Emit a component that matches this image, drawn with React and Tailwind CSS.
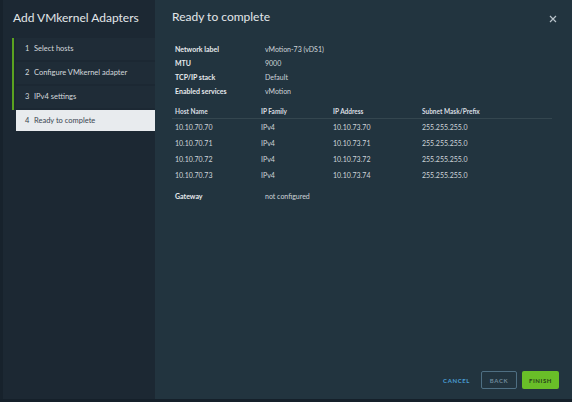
import React from 'react';

const steps = ['Select hosts', 'Configure VMkernel adapter', 'IPv4 settings', 'Ready to complete'];

const props = [
  ['Network label', 'vMotion-73 (vDS1)'],
  ['MTU', '9000'],
  ['TCP/IP stack', 'Default'],
  ['Enabled services', 'vMotion'],
];

const rows = [
  ['10.10.70.70', 'IPv4', '10.10.73.70', '255.255.255.0'],
  ['10.10.70.71', 'IPv4', '10.10.73.71', '255.255.255.0'],
  ['10.10.70.72', 'IPv4', '10.10.73.72', '255.255.255.0'],
  ['10.10.70.73', 'IPv4', '10.10.73.74', '255.255.255.0'],
];

export default function App() {
  return (
    <div
      className="w-[572px] h-[402px] flex bg-[#22343f] border-b-[3px] border-[#15202a] overflow-hidden"
      style={{ fontFamily: 'Lato, "Noto Sans", sans-serif' }}
    >
      {/* ── Sidebar ── */}
      <div className="w-[155px] shrink-0 bg-[#1c2833] border-l-[3px] border-[#17222c] flex flex-col">
        <h1 className="whitespace-nowrap text-[12px] text-[#e3e7ea] pl-[10px] pt-[9px] leading-[18px]">
          Add VMkernel Adapters
        </h1>
        <div className="relative mt-[11px] flex flex-col gap-[2px] pl-[13px]">
          <div className="absolute left-[9px] top-0 h-[72px] w-[2px] bg-[#5aa220]" />
          {steps.map((s, i) => {
            const active = i === 3;
            return (
              <div
                key={s}
                className={
                  active
                    ? 'h-[21px] flex items-center pl-[9px] text-[7.5px] bg-[#e8ebee] text-[#3a4550]'
                    : 'h-[22px] flex items-center pl-[9px] text-[7.5px] bg-[#1f2c37] text-[#d4d9dd]'
                }
              >
                <span className="w-[9px]">{i + 1}</span>
                <span>{s}</span>
              </div>
            );
          })}
        </div>
      </div>

      {/* ── Main ── */}
      <div className="flex-1 flex flex-col pl-[17px] pr-[12px]">
        <div className="flex items-center justify-between pt-[8px]">
          <h2 className="text-[12px] text-[#e3e7ea] leading-[18px]">Ready to complete</h2>
          <svg width="8" height="8" viewBox="0 0 8 8" className="mr-[3px] mt-[3px]">
            <path d="M1 1L7 7M7 1L1 7" stroke="#b8c2c9" strokeWidth="1.2" />
          </svg>
        </div>

        <div className="mt-[16px] pl-[3px] flex flex-col">
          {props.map(([k, v]) => (
            <div key={k} className="flex h-[14px] items-center text-[7px]">
              <span className="w-[90px] font-bold text-[#e6eaed]">{k}</span>
              <span className="text-[#cfd5da]">{v}</span>
            </div>
          ))}
        </div>

        <div className="mt-[11px] pr-[8px]">
          <div className="flex h-[10px] pb-[3px] items-center pl-[3px] text-[6.5px] font-bold text-[#d8dde1] border-b border-[#34464f]">
            <span className="w-[86px]">Host Name</span>
            <span className="w-[72px]">IP Family</span>
            <span className="w-[89px]">IP Address</span>
            <span>Subnet Mask/Prefix</span>
          </div>
          {rows.map((r) => (
            <div key={r[0]} className="flex h-[16px] items-center pl-[3px] text-[7px] text-[#cfd5da]">
              <span className="w-[86px]">{r[0]}</span>
              <span className="w-[72px]">{r[1]}</span>
              <span className="w-[89px]">{r[2]}</span>
              <span>{r[3]}</span>
            </div>
          ))}
          <div className="flex h-[14px] items-center pl-[3px] mt-[6px] text-[7px]">
            <span className="w-[90px] font-bold text-[#e6eaed]">Gateway</span>
            <span className="text-[#cfd5da]">not configured</span>
          </div>
        </div>

        <div className="mt-auto mb-[10px] flex items-center justify-end gap-[10px] pr-[1px]">
          <span className="text-[6px] font-bold tracking-[0.6px] text-[#4a9fd6] mr-[1px]">CANCEL</span>
          <div className="h-[18px] w-[36px] flex items-center justify-center border border-[#4f6f83] rounded-[2px] text-[6px] font-bold tracking-[0.6px] text-[#6e8a9c]">
            BACK
          </div>
          <div className="-ml-[5px] h-[18px] w-[37px] flex items-center justify-center bg-[#69be28] rounded-[2px] text-[6px] font-bold tracking-[0.6px] text-[#27421a]">
            FINISH
          </div>
        </div>
      </div>
    </div>
  );
}
